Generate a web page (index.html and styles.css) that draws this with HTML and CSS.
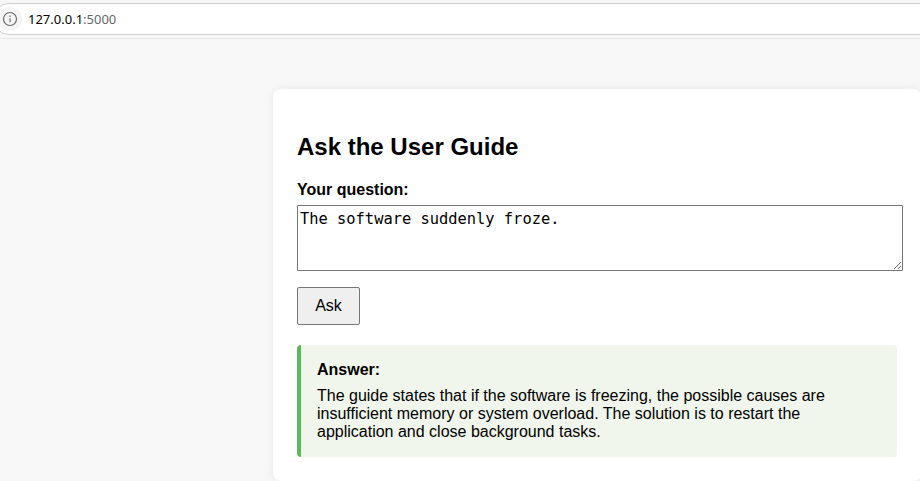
FILE: index.html
```html
<!DOCTYPE html>
<html lang="en">
<head>
<meta charset="utf-8">
<title>Ask the User Guide</title>
<link rel="stylesheet" href="styles.css">
</head>
<body>
<header class="toolbar">
  <div class="address">
    <span class="site-info">
      <svg width="16" height="16" viewBox="0 0 16 16" fill="none" stroke="#6e6e6e">
        <circle cx="8" cy="8" r="6.5" stroke-width="1.2"/>
        <path d="M8 7.2v4M8 4.5v1.4" stroke-width="1.2"/>
      </svg>
    </span>
    <span class="url">127.0.0.1<span class="port">:5000</span></span>
  </div>
</header>
<main class="card">
  <h2>Ask the User Guide</h2>
  <form>
    <label for="question">Your question:</label>
    <textarea id="question" spellcheck="false">The software suddenly froze.</textarea>
    <button type="button">Ask</button>
  </form>
  <section class="answer">
    <strong>Answer:</strong>
    <p>The guide states that if the software is freezing, the possible causes are insufficient memory or system overload. The solution is to restart the application and close background tasks.</p>
  </section>
</main>
</body>
</html>
```
FILE: styles.css
```css
* { box-sizing: border-box; }
body {
  margin: 0;
  height: 481px;
  overflow: hidden;
  background: #f8f8f8;
  color: #000;
  font: 16px/18px "Liberation Sans", Arial, sans-serif;
}
.toolbar {
  height: 39px;
  padding-top: 3px;
  background: #f7f7f7;
  border-bottom: 1px solid #e9e9e9;
}
.address {
  display: flex;
  align-items: center;
  height: 32px;
  margin: 0 -20px 0 -7px;
  padding-left: 4px;
  background: #fff;
  border: 1px solid #cecece;
  border-radius: 16px;
}
.site-info {
  display: flex;
  align-items: center;
  justify-content: center;
  width: 24px;
  height: 24px;
  border-radius: 50%;
  background: #f5f5f5;
}
.url {
  margin-left: 6px;
  font: 13px/18px "Noto Sans", "Open Sans", sans-serif;
}
.port { color: #666; }
.card {
  width: 648px;
  height: 392px;
  margin: 50px 0 0 273px;
  padding: 24px;
  background: #fff;
  border-radius: 8px;
  box-shadow: 0 0 12px rgba(0, 0, 0, 0.07);
}
h2 {
  margin: 20px 0 21px;
  font-size: 24px;
  line-height: 27px;
}
label {
  display: block;
  font-weight: bold;
}
textarea {
  display: block;
  width: 606px;
  height: 66px;
  margin: 6px 0 16px;
  padding: 2px;
  border: 1px solid #767676;
  border-radius: 1px;
  background: #fff;
  color: #000;
  font: 15.4px/22px "DejaVu Sans Mono", monospace;
}
button {
  display: block;
  width: 63px;
  height: 38px;
  padding: 0;
  border: 1px solid #767676;
  border-radius: 2px;
  background: #efefef;
  color: #000;
  font: 16px/18px "Liberation Sans", Arial, sans-serif;
}
.answer {
  width: 600px;
  height: 112px;
  margin-top: 20px;
  padding: 16px;
  background: #f0f6ec;
  border-left: 4px solid #5cb85c;
  border-radius: 4px;
}
.answer strong { display: block; }
.answer p { margin: 8px 0 0; }
```
